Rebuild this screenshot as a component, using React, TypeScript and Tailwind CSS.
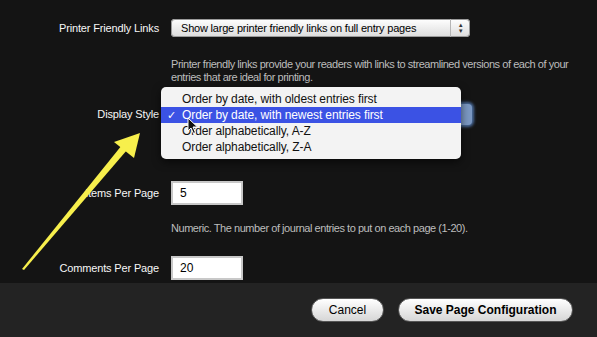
import React from "react";

const font = { fontFamily: '"Liberation Sans", Arial, sans-serif' };

const options = [
  "Order by date, with oldest entries first",
  "Order by date, with newest entries first",
  "Order alphabetically, A-Z",
  "Order alphabetically, Z-A",
];

function Label({ children }: { children: React.ReactNode }) {
  return (
    <div className="w-[160px] shrink-0 pr-[1px] text-right text-[11px] tracking-[-0.15px] text-[#f7f7f7]">
      {children}
    </div>
  );
}

function Help({ children }: { children: React.ReactNode }) {
  return (
    <div className="whitespace-nowrap pl-[171px] text-[11px] leading-[13px] tracking-[-0.45px] text-[#bdbdbd]">
      {children}
    </div>
  );
}

function NumberInput({ value }: { value: string }) {
  return (
    <div className="ml-[11px] flex h-[24px] w-[72px] items-center border-2 border-[#c8c8c8] bg-white pl-[7px] text-[12px] text-black">
      {value}
    </div>
  );
}

function Arrow() {
  return (
    <svg className="pointer-events-none absolute left-0 top-0" width="597" height="337">
      <polygon points="22,269 24,270 127,150 122,145" fill="#f7ef4c" />
      <polygon points="140,133 114,142 134,158" fill="#f7ef4c" />
    </svg>
  );
}

function Cursor() {
  return (
    <svg className="absolute left-[187px] top-[117px]" width="12" height="18" viewBox="0 0 12 18">
      <path d="M1 1 L1 14 L4 11 L6.5 16.5 L8.5 15.5 L6 10 L10.5 10 Z" fill="#111" stroke="#fff" strokeWidth="1" />
    </svg>
  );
}

export default function App() {
  return (
    <div style={font} className="relative h-[337px] w-[597px] overflow-hidden bg-[#141414]">
      <div className="h-[283px] pt-[19px]">
        {/* Printer friendly links */}
        <div className="flex items-center">
          <Label>Printer Friendly Links</Label>
          <div className="ml-[11px] flex h-[18px] w-[299px] items-center justify-between rounded-[4px] bg-gradient-to-b from-[#ffffff] to-[#dcdcdc] pl-[10px] text-[11px] tracking-[-0.2px] text-black shadow-[inset_0_0_0_1px_#9a9a9a]">
            <span className="whitespace-nowrap">Show large printer friendly links on full entry pages</span>
            <span className="flex h-full w-[20px] items-center justify-center border-l border-[#b5b5b5] text-[6px] leading-[6px] text-[#333]">
              <span className="flex flex-col items-center">
                <span>▲</span>
                <span>▼</span>
              </span>
            </span>
          </div>
        </div>
        <div className="mt-[21px]">
          <Help>
            Printer friendly links provide your readers with links to streamlined versions of each of your
            <br />
            entries that are ideal for printing.
          </Help>
        </div>

        {/* Display style */}
        <div className="mt-[20px] flex items-center">
          <Label>Display Style</Label>
          <div className="ml-[11px] h-[21px] w-[301px] rounded-[4px] bg-[#7b98c2] shadow-[0_0_3px_2px_#4b6d9e]" />
        </div>
        {/* help line for display style sits under the open menu */}
        <div className="mt-[19px] h-[13px]" />

        {/* Items per page */}
        <div className="mt-[24px] flex items-center">
          <Label>Items Per Page</Label>
          <NumberInput value="5" />
        </div>
        <div className="mt-[17px]">
          <Help>Numeric. The number of journal entries to put on each page (1-20).</Help>
        </div>
        <div className="mt-[21px] flex items-center">
          <Label>Comments Per Page</Label>
          <NumberInput value="20" />
        </div>
      </div>

      {/* footer */}
      <div className="flex h-[54px] items-center justify-end gap-[14px] bg-[#232323] pr-[24px]">
        <button className="h-[24px] w-[73px] rounded-full border border-[#555] bg-gradient-to-b from-[#ffffff] to-[#d6d6d6] text-[12px] text-black">
          Cancel
        </button>
        <button className="h-[24px] w-[175px] rounded-full border border-[#555] bg-gradient-to-b from-[#ffffff] to-[#d6d6d6] text-[12px] font-bold text-black">
          Save Page Configuration
        </button>
      </div>

      {/* open dropdown menu */}
      <div className="absolute left-[161px] top-[87px] w-[300px] rounded-[5px] bg-[#f3f3f3] py-[4px] text-[12px] tracking-[-0.1px] shadow-[0_3px_8px_rgba(0,0,0,0.6)]">
        {options.map((o, i) => (
          <div
            key={o}
            className={`flex h-[16px] items-center ${i === 1 ? "bg-[#3b52e4] text-white" : "text-[#111]"}`}
          >
            <span className="w-[21px] pl-[6px] text-[11px]">{i === 1 ? "✓" : ""}</span>
            <span>{o}</span>
          </div>
        ))}
      </div>

      <Cursor />
      <Arrow />
    </div>
  );
}
